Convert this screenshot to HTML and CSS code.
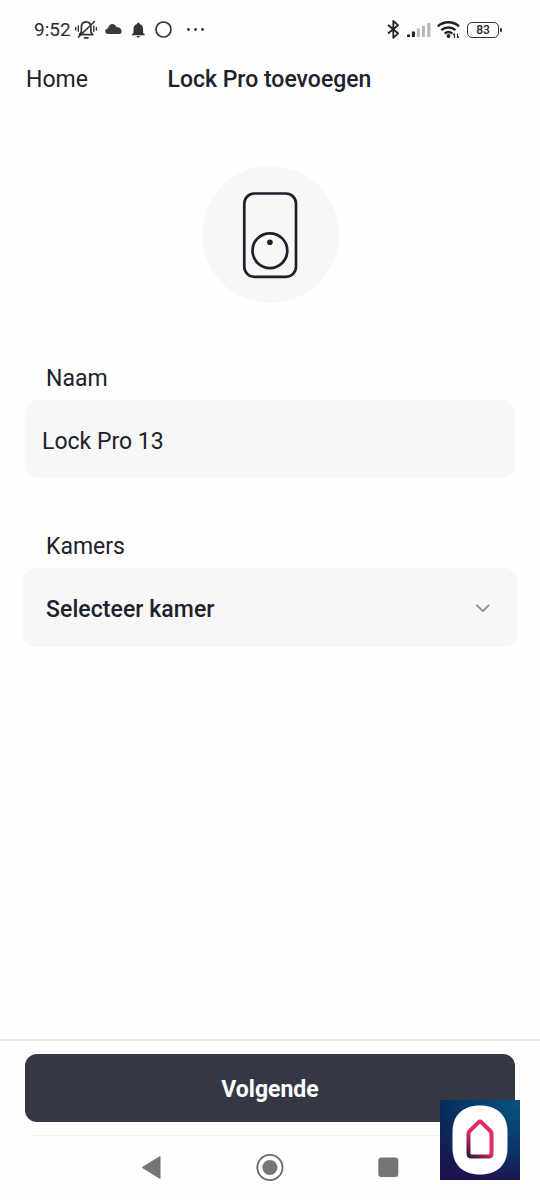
FILE: index.html
```html
<!DOCTYPE html>
<html lang="nl">
<head>
<meta charset="utf-8">
<title>Lock Pro toevoegen</title>
<link rel="stylesheet" href="styles.css">
</head>
<body>
<div class="screen">
  <div class="status">
    <span class="clock">9:52</span>
    <svg class="status-left" width="136" height="24" viewBox="72 18 136 24" fill="none" stroke="#333" stroke-width="1.7" stroke-linecap="round" stroke-linejoin="round">
      <path d="M80 34.700h12.700l-1.800-2.600v-4.600c0-3.300-1.900-5.600-4.800-5.600-3.200 0-4.700 2.600-4.700 5.600v4.200l-2 3M94.500 21.500 78.500 37M84.500 37.800h3.500"/>
      <path stroke-width="1.400" d="M75.700 27.500v2.600M78.300 26v5.200M93.800 26v5.200M96.400 27.500v2.600"/>
      <path fill="#3b3b3b" stroke="none" d="M108.200 34c-2 0-3-1.200-3-2.700s1.100-2.500 2.700-2.800c.5-2.500 2.300-4.500 4.500-4.500 2 0 3.500 1.300 4.300 3.200 2.500-.4 4.200 1.100 4.600 3 .8 1.800 0 3.800-2 3.800z"/>
      <path fill="#333" stroke="none" d="M138.300 22.700c.8 0 1.300.5 1.300 1.200 2.300.7 3.500 2.500 3.500 4.800v4l1.700 1.700v.8h-13v-.8l1.700-1.700v-4c0-2.300 1.200-4.100 3.500-4.800 0-.7.5-1.200 1.300-1.200zM136.700 35.900h3.200c0 .9-.7 1.500-1.600 1.500s-1.600-.6-1.600-1.500z"/>
      <circle cx="163.500" cy="29.500" r="7.500"/>
      <g fill="#333" stroke="none"><circle cx="188.500" cy="29.500" r="1.400"/><circle cx="195.500" cy="29.500" r="1.400"/><circle cx="202.500" cy="29.500" r="1.400"/></g>
    </svg>
    <svg class="status-right" width="82" height="24" viewBox="384 18 82 24" fill="none">
      <path stroke="#222" stroke-width="1.800" stroke-linejoin="round" d="m388 25 10 8.300-4.700 4.500V21l4.700 4.200-10 8.300"/>
      <path stroke="#222" stroke-width="3" d="M408.600 37v-2.500M413.400 37v-5.500"/>
      <path stroke="#b5b5b5" stroke-width="3" d="M418.400 37v-8.500M423.400 37V26M428.800 37V23"/>
      <path stroke="#222" stroke-width="2.500" d="M437.800 26.300c5.900-5.400 15.300-5.400 21.200 0M441.300 30.200c4-3.700 10.200-3.700 14.200 0M444.700 33.600c2.200-1.800 5.400-1.800 7.600 0"/>
      <circle cx="448.500" cy="36" r="1.900" fill="#222"/>
      <path stroke="#333" stroke-width="1.200" d="M454.500 38v-4.500m-1.300 1.500 1.300-1.500M457.500 33.500V38m1.300-1.500-1.300 1.500"/>
    </svg>
    <span class="battery">83</span>
  </div>
  <header class="topbar">
    <a class="home">Home</a>
    <h1 class="title">Lock Pro toevoegen</h1>
  </header>
  <main class="content">
    <div class="device">
      <svg width="60" height="90" viewBox="240 190 60 90" fill="none" stroke="#1f2029" stroke-width="2.700">
        <rect x="244.300" y="193.500" width="51.700" height="83.300" rx="10"/>
        <circle cx="269.900" cy="250.700" r="17.400"/>
        <circle cx="269.900" cy="242.200" r="2.800" fill="#1f2029" stroke="none"/>
      </svg>
    </div>
    <label class="label name-label">Naam</label>
    <div class="field name-field">Lock Pro 13</div>
    <label class="label room-label">Kamers</label>
    <div class="field room-field"><span class="room-text">Selecteer kamer</span>
      <svg width="16" height="12" viewBox="0 0 16 12" fill="none" stroke="#8b8b8d" stroke-width="1.700"><path d="m1.500 1.800 6.300 6.200 6.300-6.200"/></svg>
    </div>
  </main>
  <footer class="footer">
    <div class="button">Volgende</div>
    <div class="divider"></div>
    <nav class="nav">
      <svg width="260" height="32" viewBox="140 1151 260 32" fill="#757575">
        <path stroke="#757575" stroke-linejoin="round" d="M160 1156.500v22l-17.700-11z"/>
        <circle cx="269.900" cy="1167.500" r="12.600" fill="none" stroke="#686868" stroke-width="1.800"/>
        <circle cx="269.900" cy="1167.500" r="7.600"/>
        <rect x="378.300" y="1157.500" width="20" height="19.500" rx="3"/>
      </svg>
    </nav>
  </footer>
  <div class="badge">
    <svg width="80" height="80" viewBox="0 0 80 80">
      <defs>
        <linearGradient id="house" gradientUnits="userSpaceOnUse" x1="27" y1="59" x2="42" y2="44"><stop offset="0" stop-color="#1d1735"/><stop offset=".35" stop-color="#5b1a43"/><stop offset="1" stop-color="#e4296a"/></linearGradient>
      </defs>
      <path fill="#fff" d="M40 5.500C57 5.500 67.500 15 67.500 32v16C67.500 65 57 74.500 40 74.500S12.500 65 12.500 48V32C12.500 15 23 5.500 40 5.500z"/>
      <path fill="none" stroke="url(#house)" stroke-width="4" stroke-linejoin="round" d="M28.500 34q0-1.800 1.200-3l8.800-8.700q1.500-1.300 3 0l8.800 8.700q1.200 1.200 1.200 3v19.500q0 3-3 3h-17q-3 0-3-3z"/>
    </svg>
  </div>
</div>
</body>
</html>
```
FILE: styles.css
```css
* { box-sizing: border-box; }
body { margin: 0; background: #fff; font-family: Roboto, "Liberation Sans", sans-serif; color: #20212b; }
.screen { position: relative; width: 540px; height: 1200px; display: flex; flex-direction: column; background: #fefefe; overflow: hidden; }
.status { height: 58px; padding: 18px 41px 0 34px; display: flex; align-items: flex-start; }
.clock { width: 38px; font-size: 19px; line-height: 24px; color: #2b2b2b; }
.status-left, .status-right { flex: none; }
.status-right { margin-left: auto; margin-right: 1px; }
.battery { position: relative; width: 32px; height: 16px; margin-top: 4px; border: 1.5px solid #333; border-radius: 5px; font-size: 12px; font-weight: 500; line-height: 15px; text-align: center; }
.battery::after { content: ""; position: absolute; right: -4px; top: 5px; width: 2px; height: 4px; background: #333; border-radius: 1px; }
.topbar { height: 42px; padding: 0 26px; display: flex; align-items: center; }
.home { width: 141.5px; font-size: 23px; }
.title { margin: 0; font-size: 23px; font-weight: 500; white-space: nowrap; }
.content { flex: 1; padding: 66px 23px 0; display: flex; flex-direction: column; }
.device { width: 137px; height: 137px; margin: 0 0 0 178.5px; border-radius: 50%; background: #f7f7f7; display: flex; align-items: center; justify-content: center; }
.label { margin-left: 23px; font-size: 23px; line-height: 28px; }
.name-label { margin-top: 62px; }
.field { font-size: 23px; background: #f7f7f7; border-radius: 13px; display: flex; align-items: center; }
.name-field { height: 78px; margin: 7px 2px 0; padding: 4px 17px 0; }
.room-label { margin-top: 55px; }
.room-field { height: 79px; margin-top: 7px; padding: 3px 26px 0 23px; justify-content: space-between; font-weight: 500; }
.room-text { letter-spacing: .07px; }
.footer { height: 161px; border-top: 2px solid #e9e9e9; padding: 13px 25px 0; }
.button { height: 68px; padding-top: 2px; border-radius: 12px; background: #343845; color: #fff; font-size: 23px; font-weight: 700; display: flex; align-items: center; justify-content: center; }
.divider { height: 1px; margin: 13px 7px 0; background: #f2f0ee; }
.nav { display: flex; justify-content: center; padding-top: 15px; }
.badge { position: absolute; left: 440px; top: 1100px; width: 80px; height: 80px; background: radial-gradient(circle at 95% 5%, #07507d 0%, transparent 75%), linear-gradient(#042d59, #1c1450); }
.badge svg { display: block; }
```
